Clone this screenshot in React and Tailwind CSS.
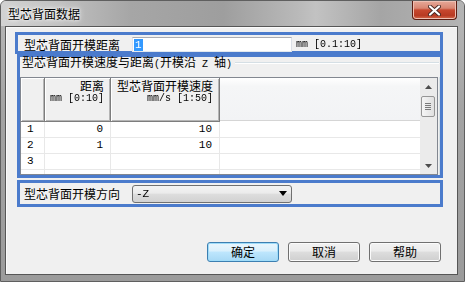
const mono = "font-['Liberation_Mono',monospace] [will-change:transform]";

const HeaderCell = ({ width, top, bottom }) => (
  <div
    className={`${width} flex h-full flex-col items-end border-b border-r border-[#7d7d7d] bg-[#f0f0f0] pr-[6px] shadow-[inset_1px_1px_0_#ffffff,inset_-1px_-1px_0_#b5b5b5]`}
  >
    <span className="text-[12px] leading-[15px]">{top}</span>
    <span className="font-['Liberation_Mono',monospace] text-[10px] leading-[11px] [will-change:transform]">{bottom}</span>
  </div>
);

const rows = [
  ["1", "0", "10"],
  ["2", "1", "10"],
  ["3", "", ""],
  ["", "", ""],
];

const Arrow = ({ down }) => (
  <svg width="7" height="4" viewBox="0 0 7 4">
    <path d={down ? "M0 0H7L3.5 4Z" : "M3.5 0L7 4H0Z"} fill="#4d4d4d" />
  </svg>
);

const Button = ({ children, primary }) => (
  <button
    className={
      primary
        ? "flex h-[20px] w-[72px] items-center justify-center rounded-[3px] border border-[#3c7fb1] bg-[linear-gradient(180deg,#eaf6fd_0%,#d9f0fc_45%,#bee6fd_50%,#a7d9f5_100%)] text-[12px] leading-none shadow-[inset_0_0_0_1px_#9fdcf9]"
        : "flex h-[20px] w-[72px] items-center justify-center rounded-[3px] border border-[#707070] bg-[linear-gradient(180deg,#f2f2f2_0%,#ebebeb_45%,#dddddd_50%,#cfcfcf_100%)] text-[12px] leading-none shadow-[inset_0_0_0_1px_#fbfbfb]"
    }
  >
    {children}
  </button>
);

export default function App() {
  return (
    <div className="h-[282px] w-[465px] overflow-hidden bg-white antialiased">
      <div className="flex h-[282px] w-[465px] flex-col overflow-hidden rounded-t-[6px] border border-[#5f5f5f] bg-[linear-gradient(180deg,#b8b8b8_0%,#a3a3a3_40%,#9b9b9b_100%)] font-['Noto_Sans_CJK_SC',sans-serif] text-black">
        {/* title bar */}
        <div className="flex h-[25px] items-start justify-between bg-[linear-gradient(90deg,#d2d2d2_0%,#c2c2c2_12%,#a6a6a6_28%,#9e9e9e_48%,#b9b9b9_64%,#c2c2c2_68%,#a5a5a5_82%,#b4b4b4_100%)] pr-[7px]">
          <span className="pl-[7px] pt-[5px] text-[12px] leading-[16px] [text-shadow:0_0_6px_#ffffff,0_0_3px_#ffffff]">
            型芯背面数据
          </span>
          <div className="flex h-[19px] w-[45px] items-center justify-center rounded-b-[4px] border border-t-0 border-[#5c1d12] bg-[linear-gradient(180deg,#e6a999_0%,#d98672_40%,#c7482f_50%,#b83a22_80%,#d36a4d_100%)] shadow-[inset_0_0_0_1px_#eec0b3]">
            <svg width="13" height="11" viewBox="0 0 13 11">
              <path d="M2 1.5L11 9.5M11 1.5L2 9.5" stroke="#4a2a24" strokeWidth="4" strokeLinecap="round" />
              <path d="M2 1.5L11 9.5M11 1.5L2 9.5" stroke="#ffffff" strokeWidth="2.2" strokeLinecap="round" />
            </svg>
          </div>
        </div>

        {/* client */}
        <div className="ml-[4px] flex h-[249px] w-[453px] flex-col border border-[#565656] bg-[#f0f0f0] shadow-[inset_1px_1px_0_#fbfbfb]">
          {/* distance row */}
          <div className="ml-[9px] mt-[5px] flex h-[22px] w-[428px] items-start border-[3px] border-[#4b7bcc] pt-[2px]">
            <span className="w-[114px] pl-[6px] text-[12px] leading-[16px]">型芯背面开模距离</span>
            <div className="flex h-[15px] w-[160px] items-center border border-[#abadb3] border-b-[#e3e9ef] border-l-[#e2e3ea] border-r-[#dbdfe6] bg-white pl-[1px]">
              <span className={`${mono} bg-[#3399ff] px-[1px] text-[11px] leading-[12px] text-white`}>1</span>
            </div>
            <span className={`${mono} ml-[4px] text-[10px] leading-[16px]`}>mm [0.1:10]</span>
          </div>

          {/* speed / distance table */}
          <div className="ml-[11px] flex h-[124px] w-[426px] flex-col border-[3px] border-[#4b7bcc]">
            <div className="flex h-[12px] items-center pl-[2px]">
              <span className="whitespace-pre text-[12px] leading-[12px]">
                型芯背面开模速度与距离<span className={`${mono} text-[10px]`}>(</span>开模沿<span className={`${mono} text-[10px]`}> Z </span>轴<span className={`${mono} text-[10px]`}>)</span>
              </span>
              <div className="ml-[3px] mr-[1px] h-[2px] flex-1 border-t border-[#d5dfe5] bg-white" />
            </div>
            <div className="mt-[8px] flex">
              <div className="flex h-[98px] w-[418px] border border-[#828790] bg-white">
                <div className="flex w-[399px] flex-col overflow-hidden">
                  <div className="flex h-[44px] shrink-0">
                    <div className="h-full w-[24px] border-b border-r border-[#7d7d7d] bg-[#f0f0f0] shadow-[inset_1px_1px_0_#ffffff,inset_-1px_-1px_0_#b5b5b5]" />
                    <HeaderCell width="w-[66px]" top="距离" bottom="mm [0:10]" />
                    <HeaderCell width="w-[109px]" top="型芯背面开模速度" bottom="mm/s [1:50]" />
                    <div className="h-[43px] flex-1 border-b border-[#d5d5d5] bg-[linear-gradient(180deg,#ffffff_0%,#f5f6f7_20%,#f2f3f5_100%)]" />
                  </div>
                  {rows.map((r, i) => (
                    <div key={i} className="flex h-[16px] shrink-0 border-b border-[#e8e8e8] font-['Liberation_Mono',monospace] text-[11px] leading-[15px]">
                      <div className="w-[24px] border-r border-[#e8e8e8] pl-[6px]">{r[0]}</div>
                      <div className="w-[66px] border-r border-[#e8e8e8] pr-[7px] text-right">{r[1]}</div>
                      <div className="w-[109px] border-r border-[#e8e8e8] pr-[7px] text-right">{r[2]}</div>
                      <div className="flex-1" />
                    </div>
                  ))}
                </div>
                <div className="flex w-[17px] flex-col bg-[#ebebeb]">
                  <div className="flex h-[17px] items-center justify-center">
                    <Arrow />
                  </div>
                  <div className="ml-[1px] mt-[1px] flex h-[21px] w-[14px] flex-col items-center justify-center gap-[1px] rounded-[2px] border border-[#969696] bg-[linear-gradient(90deg,#f5f5f5,#e0e0e0)]">
                    <div className="h-px w-[6px] bg-[#7a7a7a]" />
                    <div className="h-px w-[6px] bg-[#7a7a7a]" />
                    <div className="h-px w-[6px] bg-[#7a7a7a]" />
                    <div className="h-px w-[6px] bg-[#7a7a7a]" />
                  </div>
                  <div className="flex-1" />
                  <div className="flex h-[17px] items-center justify-center">
                    <Arrow down />
                  </div>
                </div>
              </div>
              <div className="ml-[1px] h-[98px] w-px bg-[#d5dfe5]" />
            </div>
          </div>

          {/* direction row */}
          <div className="ml-[11px] mt-[2px] flex h-[27px] w-[426px] items-center border-[3px] border-[#4b7bcc]">
            <span className="w-[112px] pl-[4px] text-[12px] leading-[16px]">型芯背面开模方向</span>
            <div className="flex h-[18px] w-[160px] items-center justify-between rounded-[3px] border border-[#707070] bg-[linear-gradient(180deg,#f3f3f3_0%,#ebebeb_45%,#dddddd_50%,#d2d2d2_100%)] pl-[3px] pr-[4px]">
              <span className={`${mono} text-[11px] leading-[12px]`}>-Z</span>
              <svg width="8" height="5" viewBox="0 0 8 5">
                <path d="M0 0H8L4 5Z" fill="#000000" />
              </svg>
            </div>
          </div>

          {/* buttons */}
          <div className="ml-[201px] mt-[35px] flex gap-[9px]">
            <Button primary>确定</Button>
            <Button>取消</Button>
            <Button>帮助</Button>
          </div>
        </div>
      </div>
    </div>
  );
}
